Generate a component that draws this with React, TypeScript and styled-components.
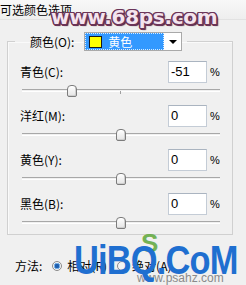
import React from 'react';
import styled, { createGlobalStyle } from 'styled-components';

const Global = createGlobalStyle`
  html, body { margin: 0; padding: 0; background: #f0f0f0; }
  body {
    font-family: "Noto Sans CJK SC", "Liberation Sans", sans-serif;
    font-size: 12px;
    color: #000;
  }
`;

const Window = styled.div`
  position: relative;
  width: 246px;
  height: 285px;
  overflow: hidden;
  background: #f0f0f0;
`;

const TitleBar = styled.div`
  height: 20px;
  line-height: 19px;
  font-size: 12px;
  white-space: nowrap;
  background: linear-gradient(#f8f8f8, #eeeeee);
  border-bottom: 1px solid #e2e2e2;
  box-sizing: border-box;
`;

const Group = styled.fieldset`
  margin: 12px 0 0 7px;
  width: 226px;
  min-width: 0;
  box-sizing: border-box;
  border: 1px solid #d0d0d0;
  box-shadow: inset 1px 1px 0 #fafafa;
  padding: 10px 12px 3px 12px;
`;

const Legend = styled.legend`
  display: flex;
  align-items: center;
  gap: 10px;
  height: 19px;
  padding: 0 5px 0 15px;
  margin-left: -5px;
`;

const Label = styled.span`
  font-size: 12px;
  line-height: 14px;
  white-space: nowrap;
`;

const Select = styled.div`
  display: flex;
  width: 98px;
  height: 19px;
  box-sizing: border-box;
  border: 1px solid #a9a9a9;
  background: #fff;
`;

const SelectValue = styled.div`
  flex: 1;
  display: flex;
  align-items: center;
  gap: 6px;
  padding-left: 4px;
  background: #3399ff;
  outline: 1px dotted #d8ecff;
  outline-offset: -1px;
  color: #fff;
  font-size: 12px;
`;

const Swatch = styled.span<{ $color: string }>`
  width: 13px;
  height: 12px;
  box-sizing: border-box;
  border: 1px solid #1a1a1a;
  background: ${p => p.$color};
`;

const Arrow = styled.div`
  width: 17px;
  display: flex;
  align-items: center;
  justify-content: center;
  &::after {
    content: "";
    border-left: 4px solid transparent;
    border-right: 4px solid transparent;
    border-top: 4px solid #000;
  }
`;

const Row = styled.div`
  & + & { margin-top: 6px; }
`;

const RowHead = styled.div`
  display: flex;
  align-items: center;
  height: 22px;
`;

const RowLabel = styled(Label)`
  flex: 1;
`;

const NumBox = styled.div`
  width: 39px;
  height: 22px;
  box-sizing: border-box;
  border: 1px solid #c4ccd6;
  border-top-color: #aab4c0;
  background: #fff;
  padding-left: 2px;
  line-height: 20px;
  font-family: "Liberation Sans", sans-serif;
  font-size: 13px;
`;

const Pct = styled.span`
  width: 10px;
  margin-left: 3px;
  font-family: "Liberation Sans", sans-serif;
  font-size: 11px;
`;

const Slider = styled.div`
  position: relative;
  height: 16px;
  margin-left: 2px;
`;

const Track = styled.div`
  position: absolute;
  left: 0;
  right: 0;
  top: 6px;
  height: 1px;
  border-top: 1px solid #a8a8a8;
  border-bottom: 1px solid #ffffff;
`;

const Tick = styled.div`
  position: absolute;
  left: 98px;
  top: 8px;
  width: 1px;
  height: 3px;
  background: #a0a0a0;
`;

const Thumb = styled.div`
  position: absolute;
  top: 2px;
  width: 10px;
  height: 12px;
  margin-left: -5px;
  box-sizing: border-box;
  border: 1px solid #7c7c7c;
  border-radius: 4px 4px 2px 2px;
  background: linear-gradient(#ffffff, #e4e4e4);
  box-shadow: inset -1px -1px 0 #cfcfcf;
`;

const MethodRow = styled.div`
  display: flex;
  align-items: center;
  height: 16px;
  margin: 23px 0 0 15px;
`;

const Radio = styled.span<{ $checked?: boolean }>`
  width: 10px;
  height: 10px;
  box-sizing: border-box;
  border-radius: 50%;
  border: 1px solid #8a8a8a;
  background: ${p => (p.$checked ? 'radial-gradient(circle, #1e5fae 0 2px, #7ab0e6 2.5px 3px, #f4f4f4 3.5px)' : '#f4f4f4')};
  margin-right: 5px;
`;

const MethodLabel = styled(Label)`
  margin-right: 10px;
`;

const Watermark68 = styled.div`
  position: absolute;
  left: 51px;
  top: 5px;
  font-family: "DejaVu Sans", sans-serif;
  font-weight: bold;
  font-size: 20px;
  letter-spacing: -0.3px;
  color: #f4e4ee;
  text-shadow:
    1.5px 0 0 #6a3458, -1.5px 0 0 #6a3458, 0 1.5px 0 #6a3458, 0 -1.5px 0 #6a3458,
    1px 1px 0 #6a3458, -1px -1px 0 #6a3458, 1px -1px 0 #6a3458, -1px 1px 0 #6a3458,
    2px 2px 1px #4a2040;
`;

const WatermarkUi = styled.div`
  position: absolute;
  left: 74px;
  top: 236px;
  font-family: "Liberation Sans", sans-serif;
  font-weight: bold;
  font-size: 41px;
  letter-spacing: -1px;
  color: #1f6fd0;
  line-height: 48px;
  white-space: nowrap;
  transform: scaleX(0.84);
  transform-origin: left center;
`;

const WatermarkS = styled.div`
  position: absolute;
  left: 141px;
  top: 228px;
  font-family: "Liberation Sans", sans-serif;
  font-weight: bold;
  font-size: 26px;
  color: #5ea83a;
  opacity: 0.85;
`;

const WatermarkSub = styled.div`
  position: absolute;
  left: 137px;
  top: 271px;
  font-family: "Liberation Sans", sans-serif;
  font-size: 12px;
  color: #8a8a8a;
`;

type Channel = { label: string; value: number };

const channels: Channel[] = [
  { label: '青色(C):', value: -51 },
  { label: '洋红(M):', value: 0 },
  { label: '黄色(Y):', value: 0 },
  { label: '黑色(B):', value: 0 },
];

export default function App() {
  return (
    <Window>
      <Global />
      <TitleBar>可选颜色选项</TitleBar>
      <Group>
        <Legend>
          <Label>颜色(O):</Label>
          <Select>
            <SelectValue>
              <Swatch $color="#ffff00" />
              黄色
            </SelectValue>
            <Arrow />
          </Select>
        </Legend>
        {channels.map(c => (
          <Row key={c.label}>
            <RowHead>
              <RowLabel>{c.label}</RowLabel>
              <NumBox>{c.value}</NumBox>
              <Pct>%</Pct>
            </RowHead>
            <Slider>
              <Track />
              <Tick />
              <Thumb style={{ left: `${99 + (c.value / 100) * 96}px` }} />
            </Slider>
          </Row>
        ))}
      </Group>
      <MethodRow>
        <MethodLabel>方法:</MethodLabel>
        <Radio $checked />
        <MethodLabel>相对(R)</MethodLabel>
        <Radio />
        <Label>绝对(A)</Label>
      </MethodRow>
      <Watermark68>www.68ps.com</Watermark68>
      <WatermarkS>S</WatermarkS>
      <WatermarkSub>www.psahz.com</WatermarkSub>
      <WatermarkUi>UiBQ.CoM</WatermarkUi>
    </Window>
  );
}
